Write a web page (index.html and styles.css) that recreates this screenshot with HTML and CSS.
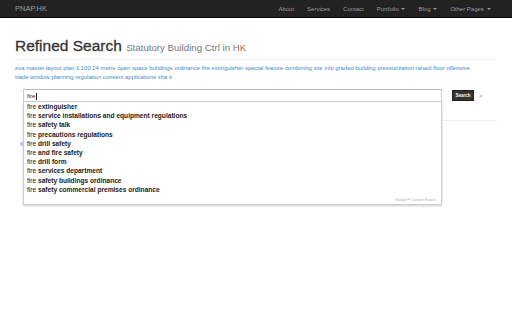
FILE: index.html
```html
<!DOCTYPE html>
<html lang="en">

<head>
    <meta charset="UTF-8">
    <meta name="viewport" content="width=device-width, initial-scale=1.0">
    <title>Refined Search - PNAP.HK</title>
    <link rel="stylesheet" href="styles.css">
</head>

<body>
    <nav class="navbar">
        <a class="brand" href="#">PNAP.HK</a>
        <ul class="nav">
            <li><a href="#">About</a></li>
            <li><a href="#">Services</a></li>
            <li><a href="#">Contact</a></li>
            <li><a href="#">Portfolio <span class="caret"></span></a></li>
            <li><a href="#">Blog <span class="caret"></span></a></li>
            <li><a href="#">Other Pages <span class="caret"></span></a></li>
        </ul>
    </nav>

    <div class="container">
        <div class="page-header">
            <h1>Refined Search <small>Statutory Building Ctrl in HK</small></h1>
        </div>

        <p class="tags">
            <a href="#">eva</a> <a href="#">master layout plan</a> <a href="#">1:100</a> <a href="#">24 metre</a>
            <a href="#">open space</a> <a href="#">buildings ordinance</a> <a href="#">fire extinguisher</a>
            <a href="#">special feature</a> <a href="#">combining site</a> <a href="#">mlp</a>
            <a href="#">graded building</a> <a href="#">pressurization</a> <a href="#">raised floor</a>
            <a href="#">offensive trade</a> <a href="#">window</a> <a href="#">planning regulation</a>
            <a href="#">consent applications</a> <a href="#">sha ti</a>
        </p>

        <!-- Custom search box -->
        <div class="cse">
            <div class="search-row">
                <div class="search-box">
                    <div class="search-input">fire<span class="cursor"></span></div>

                    <div class="suggestions">
                        <div class="suggestion">fire <b>extinguisher</b></div>
                        <div class="suggestion">fire <b>service installations and equipment regulations</b></div>
                        <div class="suggestion">fire <b>safety talk</b></div>
                        <div class="suggestion">fire <b>precautions regulations</b></div>
                        <div class="suggestion">fire <b>drill safety</b></div>
                        <div class="suggestion">fire <b>and fire safety</b></div>
                        <div class="suggestion">fire <b>drill form</b></div>
                        <div class="suggestion">fire <b>services department</b></div>
                        <div class="suggestion">fire <b>safety buildings ordinance</b></div>
                        <div class="suggestion">fire <b>safety commercial premises ordinance</b></div>
                        <div class="suggestions-footer">Google&trade; Custom Search</div>
                    </div>
                </div>
                <button class="btn-search">Search</button>
                <span class="clear">&times;</span>
            </div>

            <div class="results">
                <p class="result-info"><a href="#">fire</a></p>
            </div>
        </div>
    </div>
</body>

</html>
```

FILE: styles.css
```css
* {
    margin: 0;
    padding: 0;
    box-sizing: border-box;
    font-family: 'Liberation Sans', Arial, Helvetica, sans-serif;
}

html,
body {
    min-height: 100%;
}

body {
    background-color: #fff;
    color: #333;
    min-height: 315px;
}

a {
    color: #428bca;
    text-decoration: none;
}

/* Navbar */
.navbar {
    height: 18px;
    background-color: #222;
    border-bottom: 1px solid #080808;
    display: flex;
    align-items: center;
}

.brand {
    color: #9d9d9d;
    font-size: 7.5px;
    padding-left: 15px;
}

.nav {
    list-style: none;
    display: flex;
    margin-left: auto;
    padding-right: 15px;
}

.nav a {
    display: block;
    color: #9d9d9d;
    font-size: 6px;
    padding: 0 6.5px;
}

.caret {
    display: inline-block;
    width: 0;
    height: 0;
    margin-left: 1px;
    vertical-align: middle;
    border-top: 2px solid #9d9d9d;
    border-left: 2px solid transparent;
    border-right: 2px solid transparent;
}

/* Header */
.container {
    padding: 0 15px;
    min-height: 290px;
}

.page-header {
    padding-top: 19px;
    padding-bottom: 5px;
    border-bottom: 1px solid #eee;
    margin-bottom: 4px;
}

h1 {
    font-size: 15.5px;
    font-weight: 500;
    color: #333;
    line-height: 1.1;
    -webkit-text-stroke: 0.3px #333;
}

h1 small {
    font-size: 9.7px;
    font-weight: normal;
    color: #777;
    -webkit-text-stroke: 0;
}

.tags {
    font-size: 5.9px;
    line-height: 9px;
    padding-right: 15px;
}

/* Search */
.cse {
    margin-top: 7px;
    padding: 0 0 0 8px;
}

.search-row {
    display: flex;
    align-items: center;
}

.search-box {
    position: relative;
    width: 419px;
}

.search-input {
    height: 13px;
    border: 1px solid #ccc;
    border-top-color: #bbb;
    font-size: 6px;
    color: #222;
    padding: 2px 3px;
    line-height: 8px;
}

.cursor {
    display: inline-block;
    width: 1px;
    height: 7px;
    background-color: #222;
    vertical-align: middle;
    margin-left: 0.5px;
}

.suggestions {
    position: absolute;
    top: 13px;
    left: 0;
    width: 100%;
    background-color: #fff;
    border: 1px solid #ccc;
    border-top: none;
    box-shadow: 0 1px 2px rgba(0, 0, 0, 0.2);
    padding: 0 2px 2px;
    z-index: 10;
}

.suggestion {
    font-size: 6.6px;
    line-height: 9.2px;
    color: #222;
    padding-left: 1px;
}

.suggestion b {
    font-weight: bold;
}

.suggestions-footer {
    text-align: right;
    font-size: 3.6px;
    color: #aaa;
    padding: 4px 3px 0 0;
}

.btn-search {
    margin-left: 10px;
    height: 11px;
    width: 22px;
    background-color: #333;
    border: 1px solid #222;
    color: #fff;
    font-size: 4.5px;
    font-weight: bold;
}

.clear {
    margin-left: 5px;
    font-size: 6px;
    color: #999;
}

.results {
    border-top: 1px solid #eee;
    margin-top: 18px;
    padding-top: 20px;
}

.result-info {
    font-size: 6px;
    margin-left: -3px;
}
```
